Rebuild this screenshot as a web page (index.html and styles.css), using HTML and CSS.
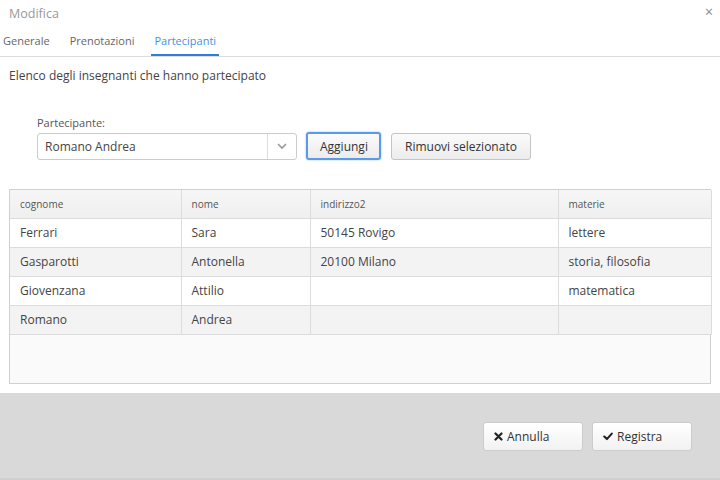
FILE: index.html
```html
<!DOCTYPE html>
<html>
<head>
<meta charset="utf-8">
<link rel="stylesheet" href="styles.css">
</head>
<body>
<div class="dialog">
  <div class="titlebar">
    <span class="title">Modifica</span>
    <span class="close">×</span>
  </div>
  <div class="tabs">
    <span class="tab">Generale</span>
    <span class="tab">Prenotazioni</span>
    <span class="tab active">Partecipanti</span>
  </div>
  <div class="content">
    <p class="intro">Elenco degli insegnanti che hanno partecipato</p>
    <div class="form">
      <label class="label">Partecipante:</label>
      <div class="controls">
        <div class="select">
          <span class="select-value">Romano Andrea</span>
          <span class="select-arrow">
            <svg width="12" height="8" viewBox="0 0 12 8"><path d="M2 2 L6 6 L10 2" fill="none" stroke="#999" stroke-width="1.6"/></svg>
          </span>
        </div>
        <button class="btn focus">Aggiungi</button>
        <button class="btn">Rimuovi selezionato</button>
      </div>
    </div>
    <div class="grid">
      <table>
        <thead>
          <tr><th class="c1">cognome</th><th class="c2">nome</th><th class="c3">indirizzo2</th><th class="c4">materie</th></tr>
        </thead>
        <tbody>
          <tr><td>Ferrari</td><td>Sara</td><td>50145 Rovigo</td><td>lettere</td></tr>
          <tr class="alt"><td>Gasparotti</td><td>Antonella</td><td>20100 Milano</td><td>storia, filosofia</td></tr>
          <tr><td>Giovenzana</td><td>Attilio</td><td></td><td>matematica</td></tr>
          <tr class="alt"><td>Romano</td><td>Andrea</td><td></td><td></td></tr>
        </tbody>
      </table>
    </div>
  </div>
  <div class="footer">
    <button class="btn fbtn"><svg class="ico" width="9" height="9" viewBox="0 0 9 9"><path d="M1.5 1.5 L7.5 7.5 M7.5 1.5 L1.5 7.5" stroke="#222" stroke-width="2.2" stroke-linecap="round"/></svg>Annulla</button>
    <button class="btn fbtn"><svg class="ico" width="10" height="9" viewBox="0 0 10 9"><path d="M1.3 4.6 L3.9 7.1 L8.8 1.6" fill="none" stroke="#222" stroke-width="2.1" stroke-linecap="round" stroke-linejoin="round"/></svg>Registra</button>
  </div>
</div>
</body>
</html>
```
FILE: styles.css
```css
* { box-sizing: border-box; }
html, body { margin: 0; padding: 0; }
body {
  width: 720px;
  height: 480px;
  background: #fff;
  font-family: "Open Sans", "Liberation Sans", sans-serif;
  color: #444;
  overflow: hidden;
}
.dialog {
  width: 720px;
  height: 480px;
  display: flex;
  flex-direction: column;
  background: #fff;
}
.titlebar {
  height: 28px;
  display: flex;
  align-items: center;
  justify-content: space-between;
  padding: 0 9px 2px 9px;
}
.title {
  font-size: 12.5px;
  color: #999;
}
.close {
  font-size: 14px;
  color: #888;
  line-height: 1;
  margin-top: -2px;
  margin-right: -2px;
}
.tabs {
  height: 29px;
  display: flex;
  gap: 14px;
  border-bottom: 1px solid #ddd;
}
.tab {
  font-size: 11px;
  color: #666;
  padding: 2px 3px 0 3px;
  line-height: 22px;
}
.tab.active {
  color: #4a90e2;
  border-bottom: 2px solid #2f7fd8;
}
.content {
  flex: 1;
  padding: 0 9px;
}
.intro {
  margin: 10px 0 0 0;
  font-size: 12px;
  line-height: 18px;
  color: #444;
}
.form {
  padding: 30px 0 0 28px;
}
.label {
  display: block;
  font-size: 11px;
  color: #555;
  line-height: 15px;
}
.controls {
  display: flex;
  align-items: center;
  gap: 10px;
  margin-top: 2px;
}
.select {
  width: 260px;
  height: 27px;
  border: 1px solid #ccc;
  border-radius: 3px;
  display: flex;
  align-items: center;
  background: #fff;
  margin-right: -1px;
}
.select-value {
  flex: 1;
  padding-left: 7px;
  font-size: 12px;
  color: #444;
}
.select-arrow {
  width: 29px;
  height: 100%;
  border-left: 1px solid #ddd;
  display: flex;
  align-items: center;
  justify-content: center;
}
.btn {
  font-family: "Open Sans", "Liberation Sans", sans-serif;
  font-size: 12px;
  color: #333;
  height: 27px;
  padding: 0 13px;
  border: 1px solid #c4c4c4;
  border-radius: 3px;
  background: linear-gradient(#fbfbfb, #ececec);
}
.btn.focus {
  border: 2px solid #5b9ae8;
  box-shadow: 0 0 2px #8fbaf0;
  height: 28px;
  padding: 0 12px;
  width: 75px;
}
.grid {
  margin-top: 29px;
  height: 195px;
  border: 1px solid #d0d0d0;
  background: #fafafa;
}
table {
  width: 100%;
  border-collapse: collapse;
  table-layout: fixed;
}
th, td {
  text-align: left;
  padding: 0 10px;
  border-right: 1px solid #dcdcdc;
  border-bottom: 1px solid #dcdcdc;
  height: 29px;
  white-space: nowrap;
}
th {
  font-size: 10px;
  font-weight: normal;
  color: #555;
  background: linear-gradient(#f6f6f6, #efefef);
  height: 28px;
}
td {
  font-size: 12px;
  color: #444;
  background: #fff;
}
tr.alt td { background: #f3f3f3; }
.c1 { width: 171px; }
.c2 { width: 129px; }
.c3 { width: 248px; }
.c4 { width: 153px; }
.footer {
  height: 87px;
  background: #d9d9d9;
  display: flex;
  justify-content: flex-end;
  align-items: flex-start;
  gap: 9px;
  padding: 29px 28px 0 0;
  border-bottom: 2px solid #cfcfcf;
}
.fbtn {
  width: 100px;
  height: 29px;
  display: flex;
  align-items: center;
  padding: 0 10px;
  border: 1px solid #ccc;
  background: linear-gradient(#ffffff, #f2f2f2);
  font-size: 12px;
  color: #333;
}
.ico {
  margin-right: 4px;
  flex: none;
}
```
